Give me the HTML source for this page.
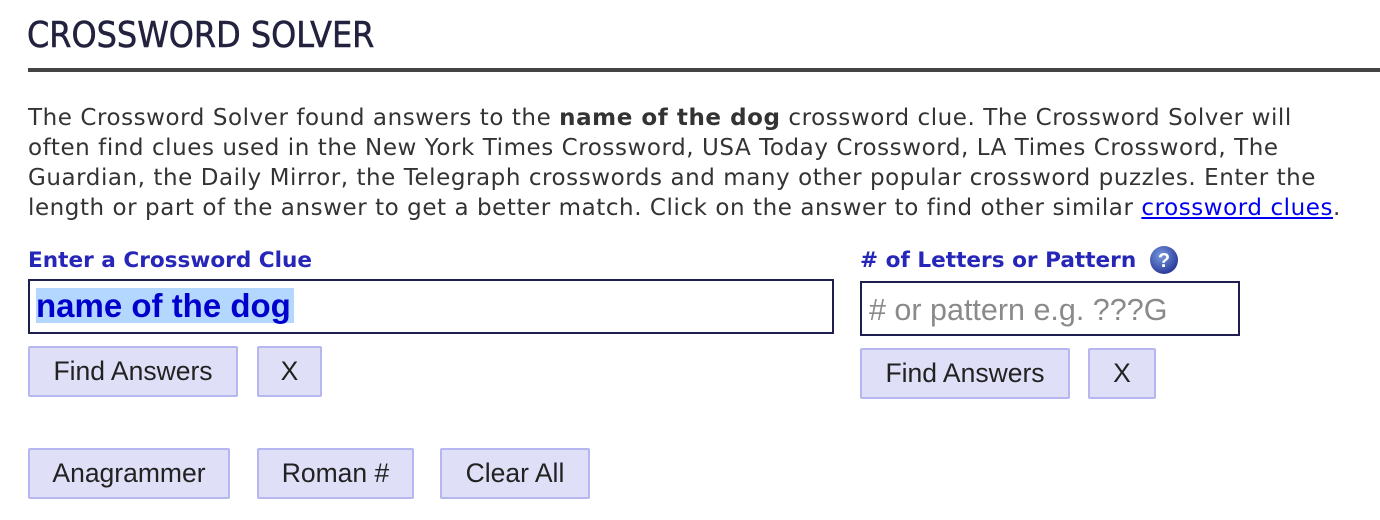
<!DOCTYPE html>
<html><head><style>
body{margin:0;width:1380px;height:520px;background:#fff;position:relative;overflow:hidden;font-family:"DejaVu Sans","Liberation Sans",sans-serif}
.a{position:absolute;white-space:nowrap}
h1{position:absolute;left:27px;top:15px;margin:0;font-family:"DejaVu Sans Condensed","DejaVu Sans",sans-serif;font-weight:normal;font-size:35.5px;color:#22223f;-webkit-text-stroke:0.5px #22223f}
.rule{position:absolute;left:28px;top:68px;width:1352px;height:4px;background:#444}
p{position:absolute;left:28px;top:103px;margin:0;font-size:23px;letter-spacing:0.56px;line-height:30px;color:#333;width:1352px;white-space:nowrap}
p a{color:#0000ee}
.lab{font-weight:bold;color:#2626b8;font-size:21.6px}
.inp{position:absolute;border:2px solid #1f1f4f;box-sizing:border-box;background:#fff}
.btn{position:absolute;box-sizing:border-box;background:#dfdff7;border:2px solid #b6b6f0;border-radius:2px;font-family:"Liberation Sans",Arial,sans-serif;font-size:26.5px;color:#222;text-align:center;line-height:47px}
</style></head><body>
<h1>CROSSWORD SOLVER</h1>
<div class="rule"></div>
<p>The Crossword Solver found answers to the <b>name of the dog</b> crossword clue. The Crossword Solver will<br>often find clues used in the New York Times Crossword, USA Today Crossword, LA Times Crossword, The<br>Guardian, the Daily Mirror, the Telegraph crosswords and many other popular crossword puzzles. Enter the<br>length or part of the answer to get a better match. Click on the answer to find other similar <a href="#">crossword clues</a>.</p>
<div class="a lab" style="left:28px;top:248px">Enter a Crossword Clue</div>
<div class="a lab" style="left:860px;top:248px">#&nbsp;of Letters or Pattern</div>
<svg class="a" style="left:1149px;top:245px" width="30" height="30" viewBox="0 0 30 30"><defs><radialGradient id="g" cx="40%" cy="35%" r="65%"><stop offset="0" stop-color="#7a9be0"/><stop offset="1" stop-color="#2a3b9a"/></radialGradient></defs><circle cx="15" cy="15" r="14" fill="url(#g)"/><text x="15" y="22" text-anchor="middle" font-family="Liberation Sans" font-weight="bold" font-size="20" fill="#fff">?</text></svg>
<div class="inp" style="left:28px;top:279px;width:806px;height:55px"></div>
<div class="a" style="left:36px;top:288px;height:35px;width:258px;background:#b3d7ff"></div>
<div class="a" style="left:36px;top:287px;font-family:'Liberation Sans',Arial,sans-serif;font-weight:bold;font-size:33px;color:#0000cc;line-height:38px">name of the dog</div>
<div class="inp" style="left:860px;top:281px;width:380px;height:55px"></div>
<div class="a" style="left:869px;top:292px;font-family:'Liberation Sans',Arial,sans-serif;font-size:30.5px;color:#8a8a8a;line-height:36px"># or pattern e.g. ???G</div>
<div class="btn" style="left:28px;top:346px;width:210px;height:51px">Find Answers</div>
<div class="btn" style="left:257px;top:346px;width:65px;height:51px">X</div>
<div class="btn" style="left:860px;top:348px;width:210px;height:51px">Find Answers</div>
<div class="btn" style="left:1088px;top:348px;width:68px;height:51px">X</div>
<div class="btn" style="left:28px;top:448px;width:202px;height:51px">Anagrammer</div>
<div class="btn" style="left:257px;top:448px;width:157px;height:51px">Roman #</div>
<div class="btn" style="left:440px;top:448px;width:150px;height:51px">Clear All</div>
</body></html>
